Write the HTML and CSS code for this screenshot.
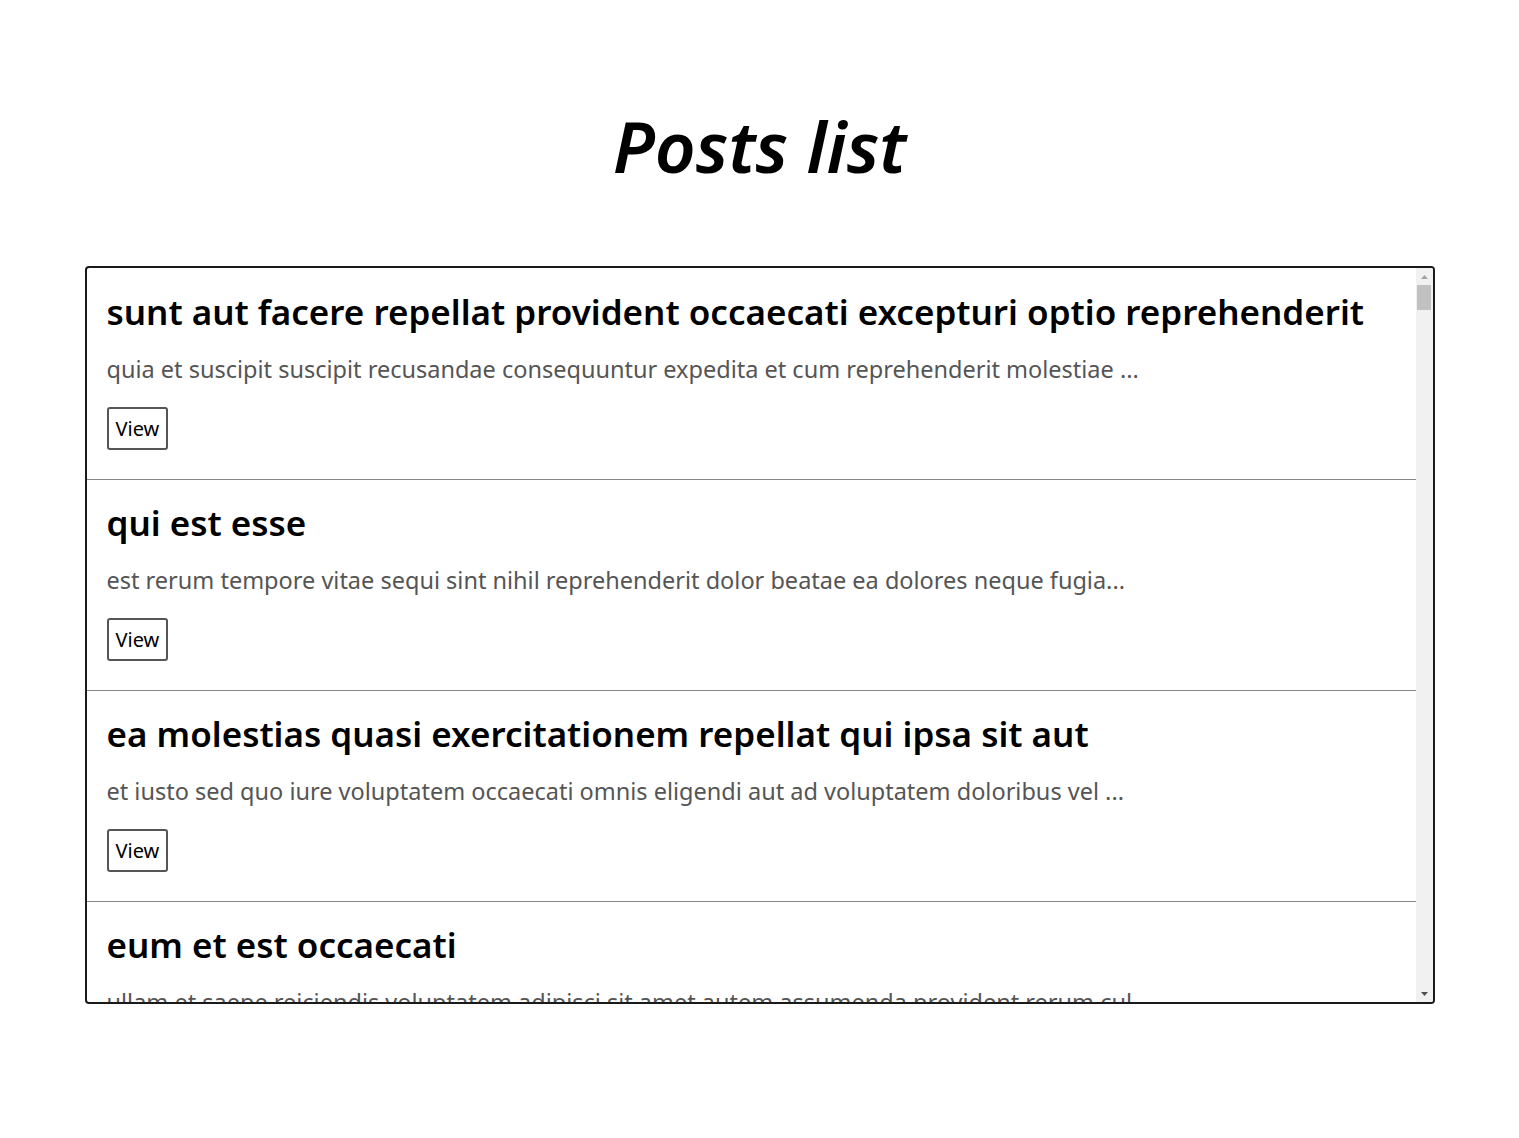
FILE: index.html
```html
<!DOCTYPE html>
<html lang="en">
<head>
<meta charset="utf-8">
<title>Posts list</title>
<link rel="stylesheet" href="styles.css">
</head>
<body>
<main class="page">
  <h1 class="page-title">Posts list</h1>
  <section class="post-list">
    <div class="post-scroll">
      <article class="post">
        <h2 class="post-title">sunt aut facere repellat provident occaecati excepturi optio reprehenderit</h2>
        <p class="post-body">quia et suscipit suscipit recusandae consequuntur expedita et cum reprehenderit molestiae ...</p>
        <button class="post-view" type="button">View</button>
      </article>
      <article class="post">
        <h2 class="post-title">qui est esse</h2>
        <p class="post-body">est rerum tempore vitae sequi sint nihil reprehenderit dolor beatae ea dolores neque fugia...</p>
        <button class="post-view" type="button">View</button>
      </article>
      <article class="post">
        <h2 class="post-title">ea molestias quasi exercitationem repellat qui ipsa sit aut</h2>
        <p class="post-body">et iusto sed quo iure voluptatem occaecati omnis eligendi aut ad voluptatem doloribus vel ...</p>
        <button class="post-view" type="button">View</button>
      </article>
      <article class="post">
        <h2 class="post-title">eum et est occaecati</h2>
        <p class="post-body">ullam et saepe reiciendis voluptatem adipisci sit amet autem assumenda provident rerum cul...</p>
        <button class="post-view" type="button">View</button>
      </article>
    </div>
    <div class="scrollbar" aria-hidden="true">
      <span class="scrollbar-btn">
        <svg class="scrollbar-arrow" width="7" height="4" viewBox="0 0 7 4"><polygon points="0,4 3.5,0 7,4" fill="#a3a3a3"/></svg>
      </span>
      <span class="scrollbar-thumb"></span>
      <span class="scrollbar-rest"></span>
      <span class="scrollbar-btn">
        <svg class="scrollbar-arrow" width="7" height="4" viewBox="0 0 7 4"><polygon points="0,0 7,0 3.5,4" fill="#505050"/></svg>
      </span>
    </div>
  </section>
</main>
</body>
</html>
```
FILE: styles.css
```css
* { box-sizing: border-box; }

body {
  margin: 0;
  background: #fff;
  color: #000;
  font-family: "Noto Sans", "Open Sans", sans-serif;
}

.page {
  padding-top: 103px;
  display: flex;
  flex-direction: column;
  align-items: center;
}

.page-title {
  margin: 0 0 78px;
  font-size: 71px;
  line-height: 85px;
  font-style: italic;
  font-weight: 600;
}

.post-list {
  display: flex;
  width: 1350px;
  height: 738px;
  border: 2px solid #1a1a1a;
  border-radius: 4px;
  overflow: hidden;
}

.post-scroll {
  flex: 1;
  min-width: 0;
  overflow: hidden;
  padding-top: 1px;
}

.post {
  display: flex;
  flex-direction: column;
  align-items: flex-start;
  padding: 22px 20px 29px;
  border-bottom: 1px solid #888;
}

.post-title {
  margin: 0;
  font-size: 35px;
  line-height: 42px;
  font-weight: 600;
  color: #000;
}

.post-body {
  margin: 19px 0 20px;
  font-size: 23.5px;
  line-height: 35px;
  color: #555;
}

.post-view {
  padding: 7px 7px;
  font-family: inherit;
  font-size: 20px;
  line-height: 25px;
  color: #000;
  background: #fff;
  border: 2px solid #555;
  border-radius: 3px;
  cursor: pointer;
}

.scrollbar {
  width: 17px;
  flex: none;
  display: flex;
  flex-direction: column;
  background: #f1f1f1;
}

.scrollbar-btn {
  height: 17px;
  flex: none;
  display: flex;
  align-items: center;
  justify-content: center;
}

.scrollbar-arrow { display: block; }

.scrollbar-thumb {
  height: 25px;
  flex: none;
  margin: 0 2px 0 1px;
  background: #c1c1c1;
}

.scrollbar-rest { flex: 1; }
```
